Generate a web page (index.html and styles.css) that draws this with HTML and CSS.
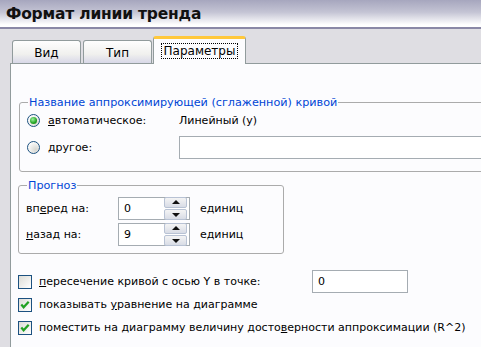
FILE: index.html
```html
<!DOCTYPE html>
<html lang="ru">
<head>
    <meta charset="utf-8">
    <title>Формат линии тренда</title>
    <link rel="stylesheet" href="styles.css">
</head>
<body>
    <!-- Заголовок окна -->
    <div class="titlebar">Формат линии тренда</div>

    <!-- Вкладки -->
    <div class="tabs">
        <div class="tab">Вид</div>
        <div class="tab">Тип</div>
        <div class="tab active"><span class="focus">Параметры</span></div>
    </div>

    <main class="panel">
        <fieldset class="group group-name">
            <legend>Название аппроксимирующей (сглаженной) кривой</legend>
            <div class="row">
                <span class="radio checked"></span>
                <span class="label w-auto"><u>а</u>втоматическое:</span>
                <span class="value">Линейный (у)</span>
            </div>
            <div class="row">
                <span class="radio"></span>
                <span class="label w-auto"><u>д</u>ругое:</span>
                <span class="input wide"></span>
            </div>
        </fieldset>

        <fieldset class="group group-forecast">
            <legend>Прогноз</legend>
            <div class="row">
                <span class="label w-spin">вп<u>е</u>ред на:</span>
                <span class="input spin">0
                    <span class="spin-btns"><span class="up"></span><span class="down"></span></span>
                </span>
                <span class="units">единиц</span>
            </div>
            <div class="row">
                <span class="label w-spin"><u>н</u>азад на:</span>
                <span class="input spin">9
                    <span class="spin-btns"><span class="up"></span><span class="down"></span></span>
                </span>
                <span class="units">единиц</span>
            </div>
        </fieldset>

        <div class="checks">
            <div class="row">
                <span class="check"></span>
                <span class="label w-cross"><u>п</u>ересечение кривой с осью Y в точке:</span>
                <span class="input small">0</span>
            </div>
            <div class="row">
                <span class="check on"><svg viewBox="0 0 13 13"><path d="M2.5 6 L5 9 L10.5 3" /></svg></span>
                <span class="label">показывать <u>у</u>равнение на диаграмме</span>
            </div>
            <div class="row">
                <span class="check on"><svg viewBox="0 0 13 13"><path d="M2.5 6 L5 9 L10.5 3" /></svg></span>
                <span class="label">поместить на диаграмму величину досто<u>в</u>ерности аппроксимации (R^2)</span>
            </div>
        </div>
    </main>
</body>
</html>
```

FILE: styles.css
```css
body {
    margin: 0;
    background-color: #dfdee3;
    font-family: "DejaVu Sans", Tahoma, sans-serif;
    font-size: 11px;
    color: #000;
    overflow: hidden;
}

u {
    text-decoration: underline;
}

/* ЗАГОЛОВОК */

.titlebar {
    height: 27px;
    line-height: 29px;
    padding-left: 6px;
    font-family: "DejaVu Sans", sans-serif;
    font-weight: bold;
    font-size: 15.5px;
    letter-spacing: -0.2px;
    color: #111;
    background: linear-gradient(#a6a6be, #c4c4d4 45%, #ffffff 92%);
    border-bottom: 2px solid #8a88a6;
}

/* ВКЛАДКИ */

.tabs {
    display: flex;
    align-items: flex-end;
    margin-left: 12px;
    padding-top: 8px;
    height: 26px;
}

.tab {
    width: 67px;
    height: 22px;
    line-height: 24px;
    margin-right: 2px;
    text-align: center;
    font-size: 12px;
    border: 1px solid #919b9c;
    border-bottom: none;
    border-radius: 3px 3px 0 0;
    background: linear-gradient(#fefefe, #f0f0ee 60%, #d8d8e8);
}

.tab.active {
    position: relative;
    z-index: 1;
    width: 91px;
    height: 25px;
    margin-bottom: -1px;
    margin-left: -1px;
    line-height: 24px;
    background: #fcfcfe;
    border-top: 3px solid #ffc83c;
}

.focus {
    outline: 1px dotted #000;
    padding: 0 2px;
}

/* ПАНЕЛЬ */

.panel {
    margin-left: 10px;
    height: 300px;
    background-color: #fcfcfe;
    border-top: 1px solid #919b9c;
    border-left: 1px solid #919b9c;
    padding: 31px 0 0 8px;
}

.group {
    margin: 0;
    padding: 0 0 0 7px;
    border: 1px solid #ababab;
    border-radius: 3px;
    box-sizing: border-box;
}

.group legend {
    color: #0046d5;
    padding: 0 1px;
    margin-left: 1px;
    font-size: 11.2px;
    line-height: 15px;
}

.group-name {
    width: 600px;
    height: 77px;
}

.group-forecast {
    margin-top: 6px;
    margin-left: -1px;
    padding-top: 2px;
    width: 266px;
    height: 76px;
}

.row {
    display: flex;
    align-items: center;
}

.group-name .row:first-of-type {
    height: 20px;
}

.group-name .row + .row {
    height: 24px;
    margin-top: 5px;
}

.group-forecast .row {
    height: 26px;
}

.label {
    white-space: nowrap;
}

.w-auto {
    width: 131px;
    margin-left: 8px;
}

.w-spin {
    width: 92px;
}

.w-cross {
    width: 273px;
    margin-left: 7px;
}

.value {
    white-space: nowrap;
}

/* ПОЛЯ ВВОДА */

.input {
    display: flex;
    align-items: center;
    box-sizing: border-box;
    height: 23px;
    padding-left: 5px;
    background: #fff;
    border: 1px solid #a5acb2;
}

.wide {
    width: 320px;
}

.spin {
    width: 72px;
    height: 23px;
    padding-right: 2px;
    justify-content: space-between;
}

.small {
    width: 96px;
}

.units {
    margin-left: 10px;
}

.spin-btns {
    display: flex;
    flex-direction: column;
    gap: 1px;
}

.up,
.down {
    position: relative;
    width: 21px;
    height: 9px;
    border: 1px solid #b8c2d4;
    border-radius: 2px;
    background: linear-gradient(#f4f4f4, #d8dce6);
}

.up::after,
.down::after {
    content: "";
    position: absolute;
    left: 7px;
    border-left: 4px solid transparent;
    border-right: 4px solid transparent;
}

.up::after {
    top: 2px;
    border-bottom: 4px solid #111;
}

.down::after {
    top: 3px;
    border-top: 4px solid #111;
}

/* РАДИОКНОПКИ И ФЛАЖКИ */

.radio {
    position: relative;
    box-sizing: border-box;
    width: 13px;
    height: 13px;
    border: 1px solid #1c5180;
    border-radius: 50%;
    background: radial-gradient(circle at 70% 70%, #d6d6d0, #fff 80%);
    flex-shrink: 0;
}

.radio.checked::after {
    content: "";
    position: absolute;
    left: 2px;
    top: 2px;
    width: 7px;
    height: 7px;
    border-radius: 50%;
    background: radial-gradient(circle at 40% 35%, #9ef29e, #21a121 60%, #1a8a1a);
}

.checks {
    margin-top: 16px;
    margin-left: -1px;
}

.checks .row {
    height: 23px;
}

.check {
    box-sizing: border-box;
    width: 14px;
    height: 14px;
    border: 1px solid #1c5180;
    background: linear-gradient(135deg, #dcdcd6, #fff);
    flex-shrink: 0;
}

.check + .label {
    margin-left: 7px;
}

.check svg {
    display: block;
    width: 12px;
    height: 12px;
}

.check svg path {
    fill: none;
    stroke: #21a121;
    stroke-width: 2.4;
}
```
